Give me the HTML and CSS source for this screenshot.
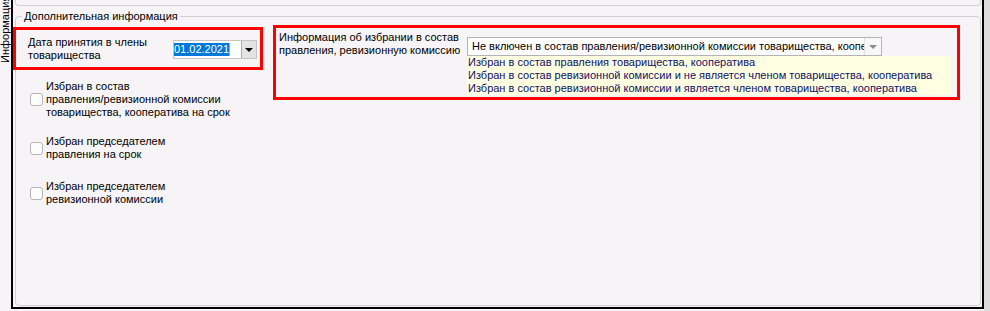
FILE: index.html
```html
<!DOCTYPE html>
<html lang="ru">
<head>
  <meta charset="UTF-8">
  <title>Дополнительная информация</title>
  <link rel="stylesheet" href="styles.css">
</head>
<body>
  <div class="window">
    <div class="side-tab">
      <div class="side-tab-label">Информация</div>
    </div>

    <div class="frame">
      <div class="top-panel"></div>

      <fieldset class="group">
        <legend>Дополнительная информация</legend>

        <div class="group-body">
          <div class="left-col">
            <div class="highlight date-box">
              <div class="date-label">Дата принятия в члены<br>товарищества</div>
              <div class="date-input">
                <span class="date-value">01.02.2021</span>
                <span class="date-btn"><span class="arrow"></span></span>
              </div>
            </div>

            <div class="check-list">
              <div class="check-row row-1">
                <span class="check"></span>
                <span class="check-label">Избран в состав<br>правления/ревизионной комиссии<br>товарищества, кооператива на срок</span>
              </div>
              <div class="check-row row-2">
                <span class="check"></span>
                <span class="check-label">Избран председателем<br>правления на срок</span>
              </div>
              <div class="check-row row-3">
                <span class="check"></span>
                <span class="check-label">Избран председателем<br>ревизионной комиссии</span>
              </div>
            </div>
          </div>

          <div class="highlight election-box">
            <div class="election-label">Информация об избрании в состав<br>правления, ревизионную комиссию</div>
            <div class="election-field">
              <div class="combo">
                <span class="combo-text">Не включен в состав правления/ревизионной комиссии товарищества, кооператива</span>
                <span class="combo-btn"><span class="arrow arrow-grey"></span></span>
              </div>
              <div class="combo-list">
                <div>Избран в состав правления товарищества, кооператива</div>
                <div>Избран в состав ревизионной комиссии и не является членом товарищества, кооператива</div>
                <div>Избран в состав ревизионной комиссии и является членом товарищества, кооператива</div>
              </div>
            </div>
          </div>
        </div>
      </fieldset>
    </div>

    <div class="scroll-strip"></div>
  </div>
</body>
</html>
```

FILE: styles.css
```css
body {
  margin: 0;
  width: 990px;
  height: 311px;
  overflow: hidden;
  background: #f7f4f7;
  font-family: "Liberation Sans", Arial, sans-serif;
  font-size: 11px;
  color: #000;
}
.window {
  display: flex;
  height: 311px;
}
.side-tab {
  width: 11px;
  flex: none;
}
.side-tab-label {
  writing-mode: vertical-rl;
  transform: rotate(180deg);
  height: 63px;
  line-height: 11px;
  white-space: nowrap;
}
.frame {
  width: 973px;
  height: 309px;
  box-sizing: border-box;
  flex: none;
  display: flex;
  flex-direction: column;
  border: 2px solid #000;
  border-top: 0;
}
.scroll-strip {
  flex: 1;
  background: #dcdcdc;
}
.top-panel {
  height: 5px;
  margin: 0 1px 0 2px;
  border: 1px solid #d2cfd2;
  border-top: 0;
  border-radius: 0 0 4px 4px;
}
.group {
  flex: 1;
  min-width: 0;
  margin: 4px 1px 1px 2px;
  padding: 2px 0 0 0;
  border: 1px solid #d2cfd2;
  border-radius: 4px;
}
.group legend {
  margin-left: 6px;
  padding: 0 2px;
  line-height: 13px;
}
.group-body {
  display: flex;
  align-items: flex-start;
  gap: 10px;
}
.left-col {
  width: 250px;
  flex: none;
  margin-left: -3px;
}
.highlight {
  border: 3px solid #f00;
  box-sizing: border-box;
}

/* date */
.date-box {
  margin-top: 2px;
  height: 43px;
  display: flex;
  align-items: center;
  justify-content: space-between;
  padding: 0 3px 0 12px;
  line-height: 13px;
}
.date-input {
  width: 84px;
  height: 19px;
  box-sizing: border-box;
  margin-top: 2px;
  display: flex;
  align-items: center;
  background: #fff;
  border: 1px solid #c4c4c4;
}
.date-value {
  background: #0078d7;
  color: #fff;
  line-height: 13px;
  border-right: 1px solid #f0a030;
}
.date-btn {
  margin-left: auto;
  width: 15px;
  height: 17px;
  box-sizing: border-box;
  display: flex;
  align-items: center;
  justify-content: center;
  background: #e3e3e3;
  border-left: 1px solid #adadad;
}
.arrow {
  width: 0;
  height: 0;
  border-left: 4px solid transparent;
  border-right: 4px solid transparent;
  border-top: 4px solid #000;
}
.arrow-grey {
  border-top-color: #8c8c8c;
}

/* checkboxes */
.check-list {
  padding-left: 17px;
  margin-top: 10px;
}
.check-row {
  display: flex;
  align-items: center;
  gap: 3px;
  line-height: 13px;
}
.row-2 {
  margin-top: 16px;
}
.row-3 {
  margin-top: 19px;
}
.check {
  width: 13px;
  height: 13px;
  box-sizing: border-box;
  flex: none;
  background: #fdfdfd;
  border: 1px solid #b5b5b5;
  border-radius: 3px;
}

/* election */
.election-box {
  width: 687px;
  height: 75px;
  flex: none;
  display: flex;
  padding: 3px 6px 0 3px;
  line-height: 13px;
}
.election-label {
  width: 188px;
  flex: none;
}
.election-field {
  margin-top: 6px;
}
.combo {
  width: 415px;
  height: 19px;
  box-sizing: border-box;
  display: flex;
  background: #fff;
  border: 1px solid #b4b4b4;
}
.combo-text {
  flex: 1;
  overflow: hidden;
  white-space: nowrap;
  padding-left: 4px;
  line-height: 17px;
}
.combo-btn {
  width: 16px;
  flex: none;
  display: flex;
  align-items: center;
  justify-content: center;
  border-left: 1px solid #dedede;
  background: #f8f8f8;
}
.combo-list {
  width: 484px;
  background: #ffffe1;
  color: #10106a;
  padding-left: 1px;
  box-sizing: border-box;
}
```
